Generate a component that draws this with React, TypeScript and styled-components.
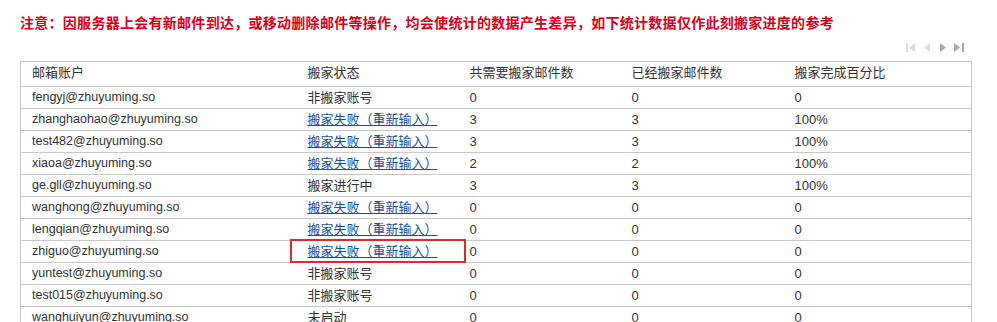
import React from "react";
import styled, { createGlobalStyle } from "styled-components";

const Global = createGlobalStyle`
  html, body { margin: 0; padding: 0; background: #fff; }
  body { font-family: "Liberation Sans", "Noto Sans CJK SC", sans-serif; }
`;

const Page = styled.div`
  padding: 13px 25px 0 20px;
  width: 952px;
`;

const Notice = styled.div`
  color: #d8001b;
  font-weight: bold;
  font-size: 14px;
  letter-spacing: 0.28px;
  line-height: 18px;
  font-family: "Noto Sans CJK SC", sans-serif;
`;

const Pager = styled.div`
  display: flex;
  justify-content: flex-end;
  align-items: center;
  gap: 8px;
  height: 14px;
  margin-top: 9px;
  margin-bottom: 7px;
  padding-right: 7px;
`;

const PagerBtn = styled.span<{ $active?: boolean }>`
  display: inline-flex;
  color: ${(p) => (p.$active ? "#aaaaaa" : "#dcdcdc")};
`;

const Table = styled.table`
  width: 952px;
  border-collapse: collapse;
  border: 1px solid #c8c8c8;
  table-layout: fixed;
  font-size: 13px;
  color: #333;
`;

const Th = styled.th`
  height: 24px;
  padding: 0 0 0 11px;
  line-height: 22px;
  vertical-align: top;
  text-align: left;
  font-weight: normal;
  border-bottom: 1px solid #c8c8c8;
`;

const Td = styled.td`
  height: 21px;
  padding: 0 0 0 11px;
  line-height: 21px;
  border-bottom: 1px solid #c8c8c8;
  white-space: nowrap;
  overflow: visible;
`;

const EmailCell = styled(Td)`
  font-size: 12.5px;
`;

const StatusCell = styled(Td)`
  position: relative;
`;

const RetryLink = styled.a`
  color: #1b4f9a;
  text-decoration: underline;
  cursor: pointer;
`;

const Highlight = styled.span`
  position: absolute;
  left: -7px;
  top: -2px;
  width: 172px;
  height: 20px;
  border: 2px solid #dd2a2e;
  pointer-events: none;
`;

type Row = {
  email: string;
  status: "fail" | string;
  total: string;
  done: string;
  pct: string;
  marked?: boolean;
};

const rows: Row[] = [
  { email: "fengyj@zhuyuming.so", status: "非搬家账号", total: "0", done: "0", pct: "0" },
  { email: "zhanghaohao@zhuyuming.so", status: "fail", total: "3", done: "3", pct: "100%" },
  { email: "test482@zhuyuming.so", status: "fail", total: "3", done: "3", pct: "100%" },
  { email: "xiaoa@zhuyuming.so", status: "fail", total: "2", done: "2", pct: "100%" },
  { email: "ge.gll@zhuyuming.so", status: "搬家进行中", total: "3", done: "3", pct: "100%" },
  { email: "wanghong@zhuyuming.so", status: "fail", total: "0", done: "0", pct: "0" },
  { email: "lengqian@zhuyuming.so", status: "fail", total: "0", done: "0", pct: "0" },
  { email: "zhiguo@zhuyuming.so", status: "fail", total: "0", done: "0", pct: "0", marked: true },
  { email: "yuntest@zhuyuming.so", status: "非搬家账号", total: "0", done: "0", pct: "0" },
  { email: "test015@zhuyuming.so", status: "非搬家账号", total: "0", done: "0", pct: "0" },
  { email: "wanghuiyun@zhuyuming.so", status: "未启动", total: "0", done: "0", pct: "0" },
];

const FirstIcon = () => (
  <svg width="10" height="9" viewBox="0 0 10 9" fill="currentColor">
    <rect x="0" y="0" width="2" height="9" />
    <path d="M9 0 L3 4.5 L9 9 Z" />
  </svg>
);
const PrevIcon = () => (
  <svg width="7" height="9" viewBox="0 0 7 9" fill="currentColor">
    <path d="M6 0 L0 4.5 L6 9 Z" />
  </svg>
);
const NextIcon = () => (
  <svg width="7" height="9" viewBox="0 0 7 9" fill="currentColor">
    <path d="M1 0 L7 4.5 L1 9 Z" />
  </svg>
);
const LastIcon = () => (
  <svg width="11" height="9" viewBox="0 0 11 9" fill="currentColor">
    <path d="M0 0 L6 4.5 L0 9 Z" />
    <rect x="8" y="0" width="2" height="9" />
  </svg>
);

export default function App() {
  return (
    <>
      <Global />
      <Page>
        <Notice>
          注意：因服务器上会有新邮件到达，或移动删除邮件等操作，均会使统计的数据产生差异，如下统计数据仅作此刻搬家进度的参考
        </Notice>
        <Pager>
          <PagerBtn><FirstIcon /></PagerBtn>
          <PagerBtn><PrevIcon /></PagerBtn>
          <PagerBtn $active><NextIcon /></PagerBtn>
          <PagerBtn $active><LastIcon /></PagerBtn>
        </Pager>
        <Table>
          <colgroup>
            <col style={{ width: 276 }} />
            <col style={{ width: 162 }} />
            <col style={{ width: 162 }} />
            <col style={{ width: 163 }} />
            <col />
          </colgroup>
          <thead>
            <tr>
              <Th>邮箱账户</Th>
              <Th>搬家状态</Th>
              <Th>共需要搬家邮件数</Th>
              <Th>已经搬家邮件数</Th>
              <Th>搬家完成百分比</Th>
            </tr>
          </thead>
          <tbody>
            {rows.map((r) => (
              <tr key={r.email}>
                <EmailCell>{r.email}</EmailCell>
                <StatusCell>
                  {r.status === "fail" ? (
                    <RetryLink>搬家失败（重新输入）</RetryLink>
                  ) : (
                    r.status
                  )}
                  {r.marked && <Highlight />}
                </StatusCell>
                <Td>{r.total}</Td>
                <Td>{r.done}</Td>
                <Td>{r.pct}</Td>
              </tr>
            ))}
          </tbody>
        </Table>
      </Page>
    </>
  );
}
